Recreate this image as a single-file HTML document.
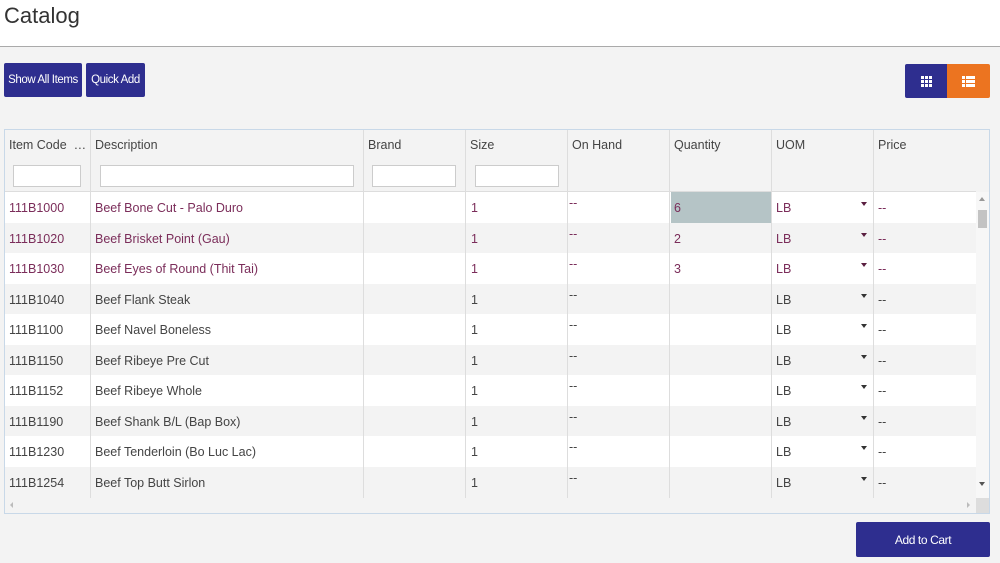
<!DOCTYPE html>
<html><head><style>
*{box-sizing:border-box;margin:0;padding:0}
body{width:1000px;height:563px;overflow:hidden;background:#f3f3f3;font-family:"Liberation Sans",sans-serif;color:#444;position:relative}
.hdr{position:absolute;left:0;top:0;width:1000px;height:47px;background:#fff;border-bottom:1px solid #aaa}
.hdr h1{font-weight:normal;font-size:22px;color:#333;position:absolute;left:4px;top:3px}
.btn{position:absolute;background:#2e2e8f;color:#fff;font-size:11.5px;display:flex;align-items:center;justify-content:center;border-radius:2px;letter-spacing:-0.4px;white-space:nowrap}
.grid{position:absolute;left:4px;top:129px;width:986px;height:385px;border:1px solid #c8d8e8;background:#f3f3f3;overflow:hidden}
.col{position:absolute;top:0;border-right:1px solid #ddd;height:368px}
.th{position:absolute;top:0;height:62px;font-size:12.5px;padding:8px 4px;color:#444;white-space:nowrap}
.th input{position:absolute;left:9px;top:35px;height:22px;border:1px solid #ccc;background:#fff}
.row{position:absolute;left:0;width:971px;height:30.5px;font-size:12.5px;white-space:nowrap}
.row span{position:absolute;top:9px}
.p{color:#7b2d5a}
.arr{position:absolute;top:10px;width:0;height:0;border-left:3.5px solid transparent;border-right:3.5px solid transparent;border-top:4px solid #333}
</style></head><body>
<div class="hdr"><h1>Catalog</h1></div>
<div class="btn" style="left:4px;top:63px;width:78px;height:34px">Show All Items</div>
<div class="btn" style="left:86px;top:63px;width:59px;height:34px">Quick Add</div>
<div class="btn" style="left:905px;top:64px;width:42px;height:34px;border-radius:2px 0 0 2px">
<svg width="11" height="11"><g fill="#fff"><rect x="0" y="0" width="3" height="3"/><rect x="4" y="0" width="3" height="3"/><rect x="8" y="0" width="3" height="3"/><rect x="0" y="4" width="3" height="3"/><rect x="4" y="4" width="3" height="3"/><rect x="8" y="4" width="3" height="3"/><rect x="0" y="8" width="3" height="3"/><rect x="4" y="8" width="3" height="3"/><rect x="8" y="8" width="3" height="3"/></g></svg></div>
<div class="btn" style="left:947px;top:64px;width:43px;height:34px;background:#ec7420;border-radius:0 2px 2px 0">
<svg width="13" height="11"><g fill="#fff"><rect x="0" y="0" width="3" height="3"/><rect x="4" y="0" width="9" height="3"/><rect x="0" y="4" width="3" height="3"/><rect x="4" y="4" width="9" height="3"/><rect x="0" y="8" width="3" height="3"/><rect x="4" y="8" width="9" height="3"/></g></svg></div>

<div class="grid">
<div style="position:absolute;left:0;top:0;width:971px;height:62px;background:#f3f3f3;border-bottom:1px solid #ddd"></div>
<div id="rows"></div>
<div class="th" style="left:0;width:86px">Item Code &nbsp;…<input style="width:68px;left:8px"></div>
<div class="th" style="left:86px;width:273px">Description<input style="width:254px"></div>
<div class="th" style="left:359px;width:102px">Brand<input style="width:84px;left:8px"></div>
<div class="th" style="left:461px;width:102px">Size<input style="width:84px;left:9px"></div>
<div class="th" style="left:563px">On Hand</div>
<div class="th" style="left:665px">Quantity</div>
<div class="th" style="left:767px">UOM</div>
<div class="th" style="left:869px">Price</div>
<div class="col" style="left:0;width:86px"></div>
<div class="col" style="left:86px;width:273px"></div>
<div class="col" style="left:359px;width:102px"></div>
<div class="col" style="left:461px;width:102px"></div>
<div class="col" style="left:563px;width:102px"></div>
<div class="col" style="left:665px;width:102px"></div>
<div class="col" style="left:767px;width:102px"></div>
<div style="position:absolute;left:971px;top:62px;width:14px;height:306px;background:#f7f7f7"></div>
<div style="position:absolute;left:973px;top:80px;width:9px;height:18px;background:#c3c3c3"></div>
<div style="position:absolute;left:974px;top:67px;border-left:3px solid transparent;border-right:3px solid transparent;border-bottom:4px solid #999"></div>
<div style="position:absolute;left:974px;top:352px;border-left:3px solid transparent;border-right:3px solid transparent;border-top:4px solid #555"></div>
<div style="position:absolute;left:0;top:368px;width:971px;height:16px;background:#f3f3f3"></div>
<div style="position:absolute;left:971px;top:368px;width:14px;height:16px;background:#ddd"></div>
<div style="position:absolute;left:5px;top:372px;border-top:3px solid transparent;border-bottom:3px solid transparent;border-right:3px solid #bbb"></div>
<div style="position:absolute;left:962px;top:372px;border-top:3px solid transparent;border-bottom:3px solid transparent;border-left:3px solid #bbb"></div>
</div>
<div class="btn" style="left:856px;top:522px;width:134px;height:35px;font-size:12px">Add to Cart</div>
<script>
var d=[["111B1000","Beef Bone Cut - Palo Duro","6"],["111B1020","Beef Brisket Point (Gau)","2"],["111B1030","Beef Eyes of Round (Thit Tai)","3"],["111B1040","Beef Flank Steak",""],["111B1100","Beef Navel Boneless",""],["111B1150","Beef Ribeye Pre Cut",""],["111B1152","Beef Ribeye Whole",""],["111B1190","Beef Shank B/L (Bap Box)",""],["111B1230","Beef Tenderloin (Bo Luc Lac)",""],["111B1254","Beef Top Butt Sirlon",""]];
var h="";d.forEach(function(r,i){var c=i<3?"p":"";var t=62+i*30.5;
h+='<div class="row '+c+'" style="top:'+t+'px;background:'+(i%2?"#f3f3f3":"#fff")+'">'+
(i==0?'<div style="position:absolute;left:666px;top:0;width:101px;height:30.5px;background:#b5c4c6"></div>':'')+
'<span style="left:4px">'+r[0]+'</span><span style="left:90px">'+r[1]+'</span><span style="left:466px">1</span><span style="left:564px;top:4px">--</span><span style="left:669px">'+r[2]+'</span><span style="left:771px">LB</span><div class="arr" style="left:856px;border-top-color:'+(i<3?"#5a1f40":"#333")+'"></div><span style="left:873px">--</span></div>';});
document.getElementById("rows").innerHTML=h;
</script>
</body></html>
